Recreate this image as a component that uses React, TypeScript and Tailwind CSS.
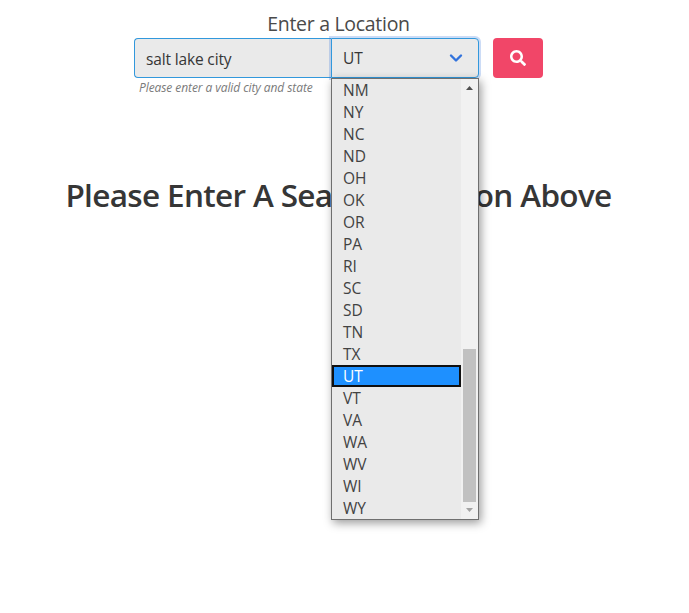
const STATES = ['NM','NY','NC','ND','OH','OK','OR','PA','RI','SC','SD','TN','TX','UT','VT','VA','WA','WV','WI','WY'];

function StateList() {
  return (
    <div className="absolute -left-px top-[39px] z-20 flex h-[442px] w-[148px] border border-[#6f6f6f] bg-[#eaeaea] shadow-[2px_3px_9px_rgba(0,0,0,0.4)]">
      <ul className="flex-1">
        {STATES.map((state) => (
          <li
            key={state}
            className={
              state === 'UT'
                ? 'h-[22px] border-2 border-[#101010] bg-[#1e90ff] pl-[9px] text-[15.5px] leading-[19px] text-white'
                : 'h-[22px] pl-[11px] text-[15.5px] leading-[23px] text-[#424242]'
            }
          >
            {state}
          </li>
        ))}
      </ul>
      <div className="flex w-[17px] flex-col items-center bg-[#f1f1f1]">
        <svg className="h-[17px] w-[17px] shrink-0" viewBox="0 0 17 17" fill="#505050"><path d="M5 11h7L8.500 7z" /></svg>
        <div className="mt-[253px] h-[153px] w-[13px] bg-[#c1c1c1]" />
        <svg className="h-[17px] w-[17px] shrink-0" viewBox="0 0 17 17" fill="#a3a3a3"><path d="M5 6h7l-3.500 4z" /></svg>
      </div>
    </div>
  );
}

export default function App() {
  return (
    <main className="flex h-[613px] w-[677px] flex-col items-center bg-white font-['Open_Sans','Noto_Sans',sans-serif]">
      <label className="mt-[9px] h-[29px] whitespace-nowrap text-[19.5px] leading-[30px] tracking-[-0.3px] text-[#4a4a4a]">Enter a Location</label>
      <form className="flex w-[409px]">
        <div className="w-[197px]">
          <div className="flex h-10 items-center rounded-l border border-r-0 border-[#3298dc] bg-[#eaeaea] pl-[11px] pt-[3px] text-[15.5px] tracking-[-0.15px] text-[#363636]">salt lake city</div>
          <p className="whitespace-nowrap pl-[5px] pt-px text-[12px] italic leading-[18px] tracking-[-0.08px] text-[#7a7a7a]">Please enter a valid city and state</p>
        </div>
        <div className="relative flex h-10 w-[148px] items-center justify-between rounded-r border border-[#3298dc] bg-[#eaeaea] pl-[11px] pr-[15px] text-[15.5px] text-[#363636] shadow-[0_0_0_2px_rgba(50,115,220,0.25)]">
          <span className="pt-px">UT</span>
          <svg className="h-[14px] w-[14px]" viewBox="0 0 14 14" fill="none" stroke="#3273dc" strokeWidth="2.400" strokeLinecap="round" strokeLinejoin="round"><path d="M2 4.500l5 5 5-5" /></svg>
          <StateList />
        </div>
        <button type="button" aria-label="Search" className="ml-[14px] flex h-10 w-[50px] items-center justify-center rounded bg-[#f14668]">
          <svg className="h-4 w-4" viewBox="0 0 512 512" fill="white"><path d="M505 442.700L405.300 343c-4.500-4.500-10.600-7-17-7H372c27.600-35.300 44-79.700 44-128C416 93.100 322.900 0 208 0S0 93.100 0 208s93.100 208 208 208c48.300 0 92.700-16.400 128-44v16.300c0 6.400 2.500 12.500 7 17l99.700 99.700c9.400 9.400 24.600 9.400 33.900 0l28.300-28.300c9.400-9.400 9.400-24.600.1-34zM208 336c-70.700 0-128-57.200-128-128 0-70.700 57.200-128 128-128 70.700 0 128 57.200 128 128 0 70.700-57.200 128-128 128z" /></svg>
        </button>
      </form>
      <h1 className="mt-[80px] whitespace-nowrap text-[31.5px] font-semibold leading-[36px] tracking-[-0.66px] text-[#363636]">Please Enter A Search Location Above</h1>
    </main>
  );
}
